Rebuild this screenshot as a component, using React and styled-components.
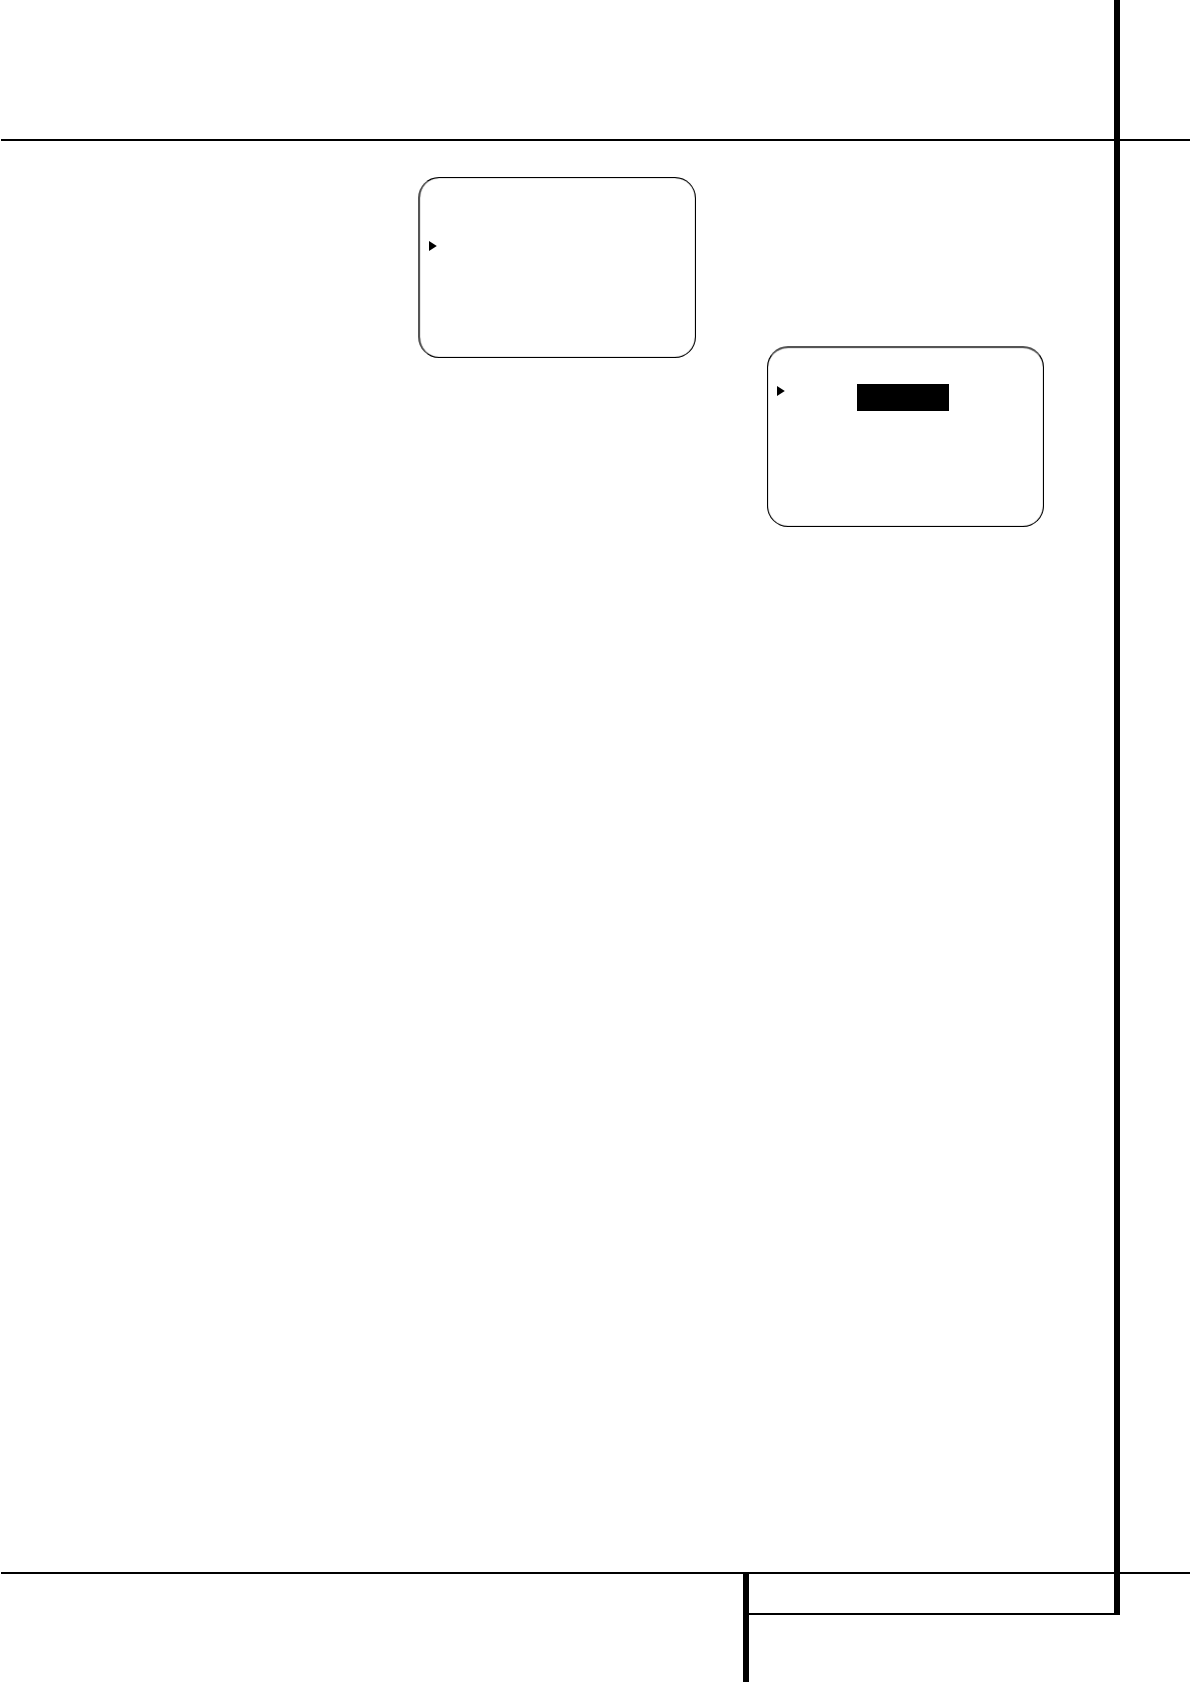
import React from "react";
import styled, { createGlobalStyle } from "styled-components";

const GlobalStyle = createGlobalStyle`
  * { box-sizing: border-box; }
  body { margin: 0; background: #fff; font-family: "Liberation Sans", Arial, sans-serif; }
`;

const Page = styled.div`
  display: grid;
  grid-template-columns: minmax(0, 2fr) minmax(0, 1fr) 6px 70px;
  grid-template-rows: 139px 2px 1fr 2px 39px 2px 67px;
  min-height: 100vh;
  padding-left: 1px;
`;

const Rule = styled.div`
  grid-column: 1 / -1;
  grid-row: ${({ $row }) => $row};
  background: #000;
`;

const Spine = styled.div`
  grid-column: 3;
  grid-row: 1 / 7;
  background: #000;
`;

const FooterBar = styled.div`
  grid-column: 2;
  grid-row: 4 / 8;
  width: 6px;
  background: #000;
`;

const FooterRule = styled.div`
  grid-column: 2 / 4;
  grid-row: 6;
  background: #000;
`;

const Content = styled.main`
  grid-column: 1 / 3;
  grid-row: 3;
  display: flex;
  justify-content: flex-end;
  align-items: flex-start;
  gap: 71px;
  padding: 36px 70px;
`;

const Screen = styled.section`
  display: flex;
  align-items: flex-start;
  gap: 72px;
  height: 181px;
  border: 1px solid #000;
  border-radius: 21px;
  box-shadow: inset 0 0 1px #000;
`;

const MenuScreen = styled(Screen)`
  width: 278px;
  padding: 61px 9px 0;
  border-left: 2px solid #555;
`;

const SetupScreen = styled(Screen)`
  width: 277px;
  margin-top: 169px;
  padding: 36px 9px 0;
  border-top: 2px solid #555;
`;

const Arrow = styled.svg`
  display: block;
  flex: none;
  margin-top: 2px;
`;

const Highlight = styled.div`
  width: 92px;
  height: 27px;
  background: #000;
`;

function Cursor() {
  return (
    <Arrow width="8" height="10" viewBox="0 0 8 10" aria-hidden="true">
      <path d="M0 0 L7.8 5 L0 10 Z" fill="#000" />
    </Arrow>
  );
}

export default function App() {
  return (
    <>
      <GlobalStyle />
      <Page>
        <Rule $row={2} />
        <Content>
          <MenuScreen>
            <Cursor />
          </MenuScreen>
          <SetupScreen>
            <Cursor />
            <Highlight />
          </SetupScreen>
        </Content>
        <Rule $row={4} />
        <Spine />
        <FooterBar />
        <FooterRule />
      </Page>
    </>
  );
}
